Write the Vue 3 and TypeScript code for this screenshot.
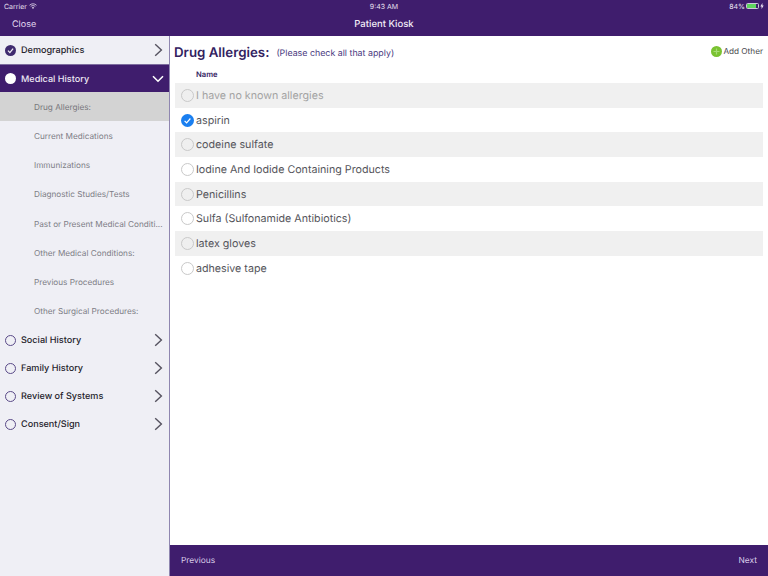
<script setup lang="ts">
const subs: string[] = ['Drug Allergies:', 'Current Medications', 'Immunizations', 'Diagnostic Studies/Tests', 'Past or Present Medical Conditi...', 'Other Medical Conditions:', 'Previous Procedures', 'Other Surgical Procedures:']
const after: string[] = ['Social History', 'Family History', 'Review of Systems', 'Consent/Sign']
const allergies: { name: string; checked?: boolean; muted?: boolean }[] = [
  { name: 'I have no known allergies', muted: true },
  { name: 'aspirin', checked: true },
  { name: 'codeine sulfate' },
  { name: 'Iodine And Iodide Containing Products' },
  { name: 'Penicillins' },
  { name: 'Sulfa (Sulfonamide Antibiotics)' },
  { name: 'latex gloves' },
  { name: 'adhesive tape' },
]
</script>

<template>
  <div class="app">
    <header class="top">
      <div class="status">
        <div class="st-left">
          <span>Carrier</span>
          <svg width="8" height="6" viewBox="0 0 16 12"><path d="M1 4.5 C5 .6 11 .6 15 4.5 M3.4 7 C6 4.6 10 4.6 12.6 7" fill="none" stroke="#e8e0f0" stroke-width="1.6" /><path d="M5.6 9.2 C7 8 9 8 10.4 9.2 L8 11.8 Z" fill="#e8e0f0" /></svg>
        </div>
        <span class="st-mid">9:43 AM</span>
        <div class="st-right">
          <span>84%</span>
          <span class="batt"><span class="batt-fill"></span></span>
          <svg width="4" height="6" viewBox="0 0 8 14"><path d="M5 0 L0 8 H3 L3 14 L8 6 H5 Z" fill="#e8e0f0" /></svg>
        </div>
      </div>
      <div class="nav">
        <span class="close">Close</span>
        <span class="title">Patient Kiosk</span>
      </div>
    </header>

    <div class="body">
      <aside class="side">
        <div class="sec done">
          <svg class="mark" width="11" height="11" viewBox="0 0 11 11"><circle cx="5.5" cy="5.5" r="5.5" fill="#3f2a6f" /><path d="M3 5.6 L4.9 7.6 L8.1 3.6" fill="none" stroke="#f0eff5" stroke-width="1.3" /></svg>
          <span class="sec-label">Demographics</span>
          <svg class="chev" width="9" height="14" viewBox="0 0 9 14"><path d="M1.2 1.2 L7.4 7 L1.2 12.8" fill="none" stroke="#55525f" stroke-width="1.4" /></svg>
        </div>
        <div class="sec active">
          <span class="dot"></span>
          <span class="sec-label">Medical History</span>
          <svg class="chev down" width="12" height="8" viewBox="0 0 12 8"><path d="M1 1.2 L6 6.2 L11 1.2" fill="none" stroke="#fff" stroke-width="1.6" /></svg>
        </div>
        <div class="subs">
          <div v-for="(s, i) in subs" :key="s" class="sub" :class="{ current: i === 0 }"><span class="sub-text">{{ s }}</span></div>
        </div>
        <div v-for="s in after" :key="s" class="sec">
          <span class="ring"></span>
          <span class="sec-label">{{ s }}</span>
          <svg class="chev" width="9" height="14" viewBox="0 0 9 14"><path d="M1.2 1.2 L7.4 7 L1.2 12.8" fill="none" stroke="#55525f" stroke-width="1.4" /></svg>
        </div>
      </aside>

      <main class="main">
        <div class="head">
          <h1>Drug Allergies:</h1>
          <span class="hint">(Please check all that apply)</span>
          <div class="add">
            <svg width="11" height="11" viewBox="0 0 11 11"><circle cx="5.5" cy="5.5" r="5.5" fill="#7ac231" /><path d="M5.5 2.5 V8.5 M2.5 5.5 H8.5" stroke="#a5dc74" stroke-width="1.2" /></svg>
            <span>Add Other</span>
          </div>
        </div>
        <div class="col">Name</div>
        <div class="list">
          <div v-for="a in allergies" :key="a.name" class="row" :class="{ muted: a.muted }">
            <svg v-if="a.checked" class="radio" width="13" height="13" viewBox="0 0 13 13"><circle cx="6.5" cy="6.5" r="6.5" fill="#1a7ff0" /><path d="M3.6 6.8 L5.6 8.8 L9.4 4.5" fill="none" stroke="#fff" stroke-width="1.2" /></svg>
            <span v-else class="radio empty"></span>
            <span>{{ a.name }}</span>
          </div>
        </div>
      </main>
    </div>

    <footer class="foot">
      <div class="foot-spacer"></div>
      <div class="foot-bar"><span>Previous</span><span>Next</span></div>
    </footer>
  </div>
</template>

<style>
html, body { margin: 0; padding: 0; background: #fff; }
</style>

<style scoped>
.app { width: 768px; height: 576px; display: flex; flex-direction: column; overflow: hidden; font-family: Inter, "Liberation Sans", sans-serif; background: #fff; text-rendering: geometricPrecision; }
.top { height: 36px; background: #3f1d6d; color: #e8e0f0; flex: none; }
.status { height: 12px; display: flex; align-items: center; justify-content: space-between; padding: 0 4px; font-size: 7px; position: relative; }
.st-left, .st-right { display: flex; align-items: center; gap: 2px; }
.st-right { gap: 1px; }
.st-mid { position: absolute; left: 0; right: 0; text-align: center; }
.batt { width: 13px; height: 6px; border: 1px solid #cfc6dc; border-radius: 1.5px; display: block; padding: 0; box-sizing: border-box; }
.batt-fill { display: block; width: 84%; height: 100%; background: #5fd35f; }
.nav { height: 24px; display: flex; align-items: center; position: relative; padding-left: 12px; font-size: 9px; }
.close { color: #e3d9f0; }
.title { position: absolute; left: 0; right: 0; text-align: center; font-weight: 500; color: #f2edf7; font-size: 9.5px; }
.body { flex: 1; display: flex; min-height: 0; }
.side { width: 170px; flex: none; box-sizing: border-box; background: #efeff5; border-right: 1px solid #8f86b0; }
.sec { height: 28px; display: flex; align-items: center; padding: 0 5px 0 5px; font-size: 9.1px; font-weight: 450; color: #26242c; }
.sec.done { border-bottom: 1px solid #7d6c9e; }
.sec.active { background: #3f1d6d; color: #ece6f3; height: 27px; }
.sec-label { margin-left: 5px; flex: 1; padding-top: 1px; }
.mark { flex: none; }
.dot { width: 11px; height: 11px; border-radius: 50%; background: #fff; flex: none; }
.ring { width: 11px; height: 11px; border-radius: 50%; border: 1px solid #5a4a88; box-sizing: border-box; flex: none; }
.chev { flex: none; margin-right: 1px; }
.chev.down { margin-right: 0; }
.subs { display: flex; flex-direction: column; height: 234px; }
.sub { flex: 1; display: flex; align-items: center; padding: 0 6px 0 34px; font-size: 8.2px; color: #7d7d85; }
.sub-text { white-space: nowrap; }
.sub.current { background: #d3d3d3; color: #77777c; }
.main { flex: 1; min-width: 0; padding: 0 5px; display: flex; flex-direction: column; }
.head { height: 30px; display: flex; align-items: center; box-sizing: border-box; margin-left: -1px; }
h1 { margin: 3px 0 0; font-size: 13.3px; font-weight: 600; color: #33225f; }
.hint { margin: 5px 0 0 7px; font-size: 8.85px; color: #4a3a80; }
.add { margin-left: auto; display: flex; align-items: center; font-size: 8.2px; color: #4a4a4e; gap: 1px; }
.col { height: 17px; display: flex; align-items: center; padding-left: 21px; font-size: 7.6px; font-weight: 600; color: #33225f; }
.list { display: flex; flex-direction: column; }
.row { height: 24.7px; display: flex; align-items: center; padding-left: 6px; font-size: 10.7px; color: #55555b; gap: 2px; }
.row:nth-child(odd) { background: #f0f0f0; }
.row.muted { color: #a3a3a3; }
.radio { width: 13px; height: 13px; flex: none; box-sizing: border-box; }
.radio.empty { border: 1px solid #c9c9c9; border-radius: 50%; background: #fff; }
.row:nth-child(odd) .radio.empty { background: #efefef; }
.foot { height: 31px; display: flex; flex: none; }
.foot-spacer { width: 170px; background: #efeff5; box-sizing: border-box; border-right: 1px solid #8f86b0; }
.foot-bar { flex: 1; background: #3f1d6d; display: flex; align-items: center; justify-content: space-between; padding: 0 11px; font-size: 8.4px; color: #d9cce8; }
</style>
